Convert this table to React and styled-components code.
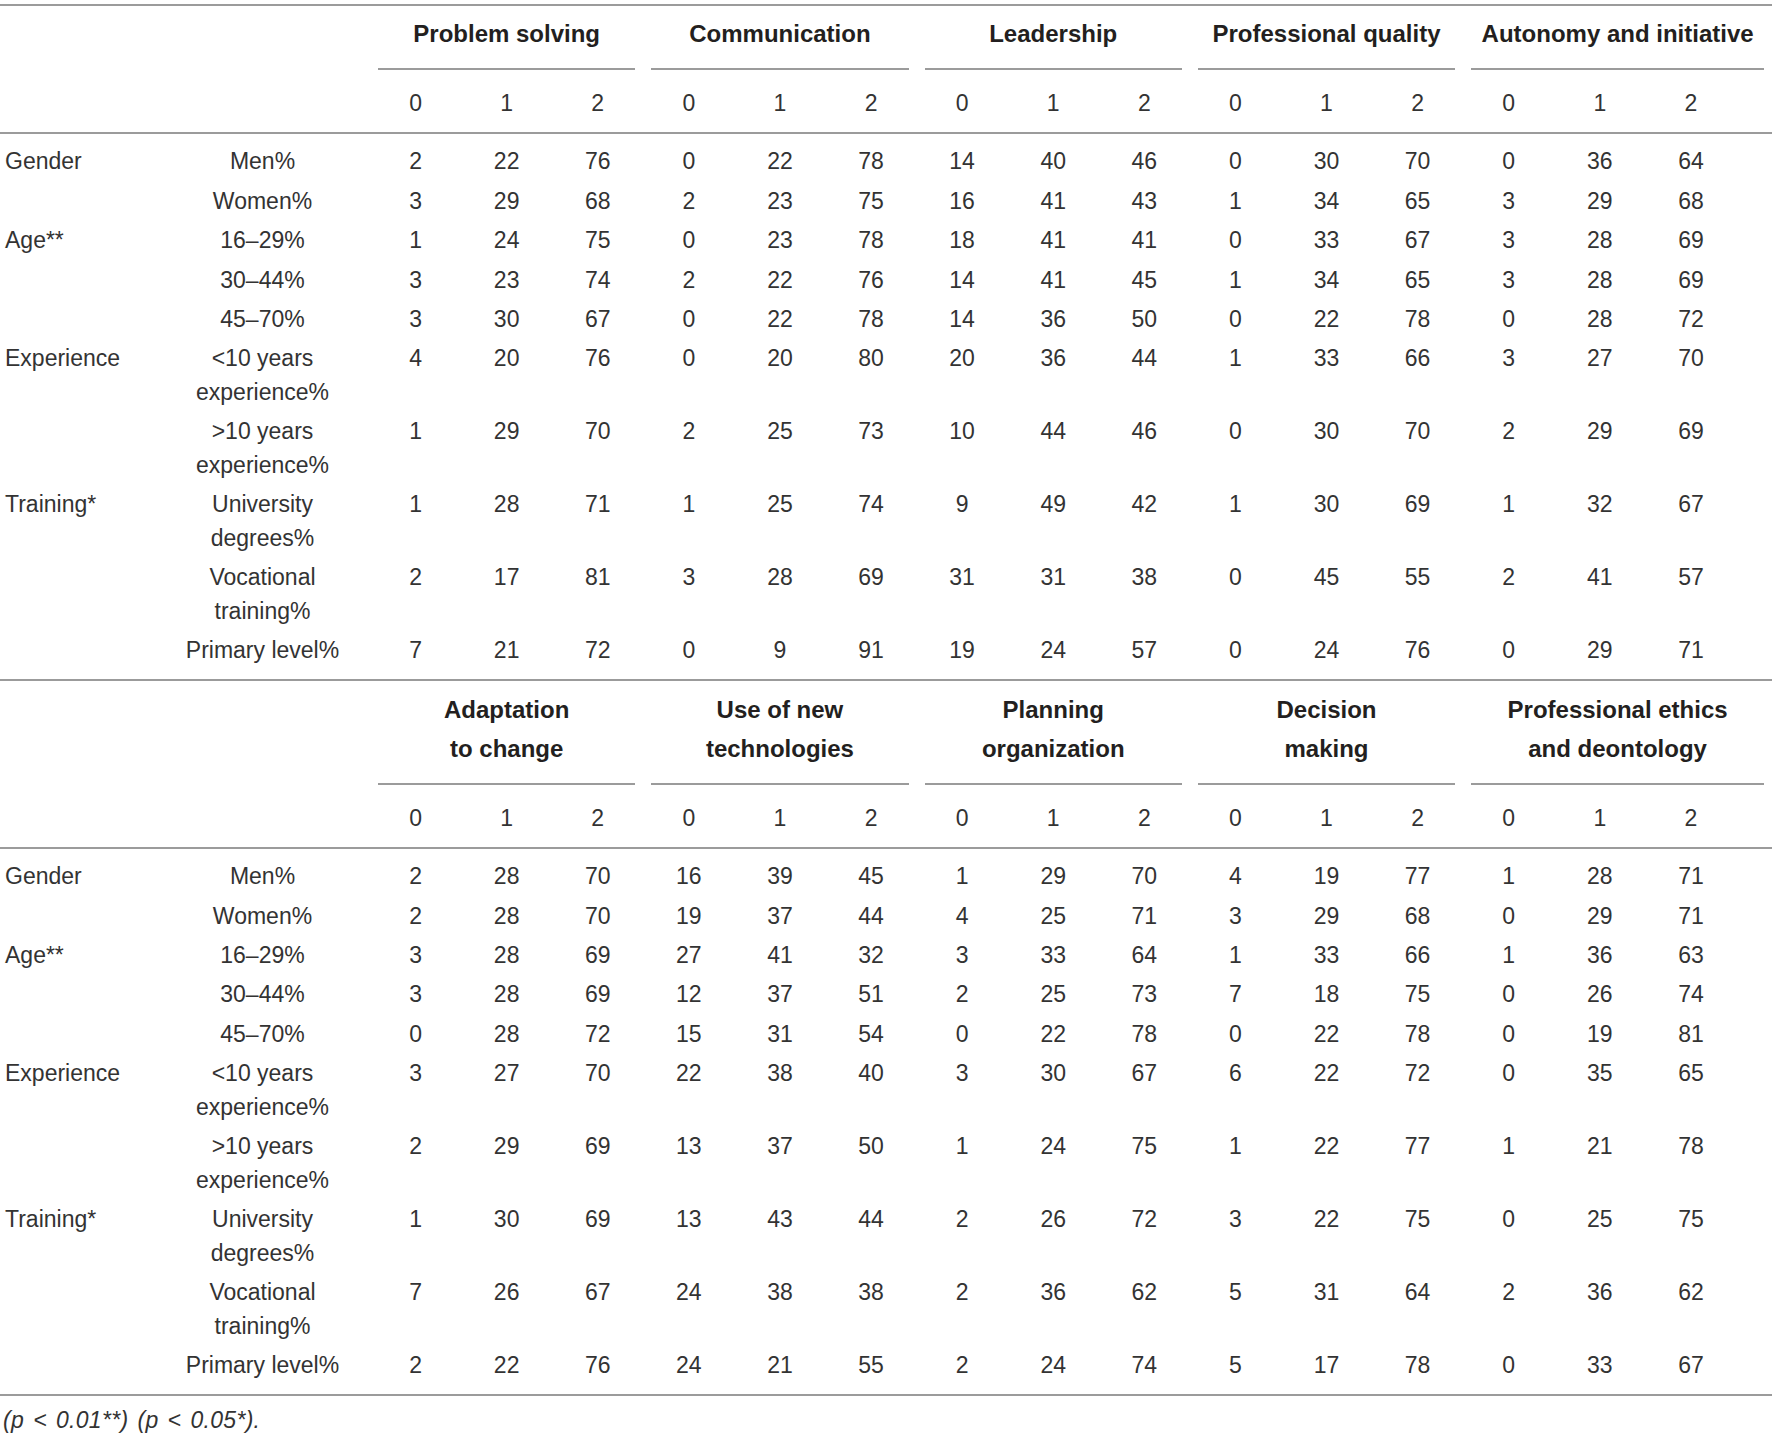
import React from 'react';
import styled, { createGlobalStyle } from 'styled-components';

const GlobalStyle = createGlobalStyle`
  body {
    margin: 0;
    background: #ffffff;
    color: #231f20;
    font-family: "Liberation Sans", Arial, sans-serif;
  }
`;

const Page = styled.div`
  padding-top: 3.6px;
  width: 1772px;
`;

const Table = styled.table`
  width: 1772px;
  table-layout: fixed;
  border-collapse: separate;
  border-spacing: 0;
  border-top: 2px solid #9b9b9b;
  font-size: 23px;
  color: #333333;
`;

const GroupHead = styled.th`
  padding: 8.6px 8px 0;
  font-size: 24px;
  font-weight: bold;
  line-height: 39.6px;
  text-align: center;
  vertical-align: bottom;
  color: #231f20;
`;

const GroupRule = styled.div`
  padding-bottom: 14px;
  border-bottom: 2px solid #9b9b9b;
`;

const ScoreHead = styled.th`
  padding: 16px ${(p) => (p.$edge ? '35.4px' : '0')} 12px 0;
  font-weight: normal;
  line-height: 34px;
  text-align: center;
  border-bottom: 2px solid #9b9b9b;
`;

const Cell = styled.td`
  padding-top: ${(p) => (p.$first ? '11.6px' : '2.9px')};
  padding-bottom: ${(p) => (p.$last ? '11.2px' : '2.9px')};
  padding-left: ${(p) => (p.$left ? '5px' : '0')};
  padding-right: ${(p) => (p.$edge ? '35.4px' : '0')};
  line-height: 33.6px;
  vertical-align: top;
  text-align: ${(p) => (p.$left ? 'left' : 'center')};
  border-bottom: ${(p) => (p.$last ? '2px solid #9b9b9b' : 'none')};
`;

const Footnote = styled.p`
  margin: 0;
  padding: 9.5px 0 0 3px;
  font-size: 23px;
  font-style: italic;
  line-height: 30px;
  letter-spacing: 0.3px;
  word-spacing: 2.4px;
  color: #333333;
`;

const rowLabels = [
  ['Gender', ['Men%']],
  ['', ['Women%']],
  ['Age**', ['16–29%']],
  ['', ['30–44%']],
  ['', ['45–70%']],
  ['Experience', ['<10 years', 'experience%']],
  ['', ['>10 years', 'experience%']],
  ['Training*', ['University', 'degrees%']],
  ['', ['Vocational', 'training%']],
  ['', ['Primary level%']],
];

const sections = [
  {
    groups: [
      ['Problem solving'],
      ['Communication'],
      ['Leadership'],
      ['Professional quality'],
      ['Autonomy and initiative'],
    ],
    rows: [
      [2, 22, 76, 0, 22, 78, 14, 40, 46, 0, 30, 70, 0, 36, 64],
      [3, 29, 68, 2, 23, 75, 16, 41, 43, 1, 34, 65, 3, 29, 68],
      [1, 24, 75, 0, 23, 78, 18, 41, 41, 0, 33, 67, 3, 28, 69],
      [3, 23, 74, 2, 22, 76, 14, 41, 45, 1, 34, 65, 3, 28, 69],
      [3, 30, 67, 0, 22, 78, 14, 36, 50, 0, 22, 78, 0, 28, 72],
      [4, 20, 76, 0, 20, 80, 20, 36, 44, 1, 33, 66, 3, 27, 70],
      [1, 29, 70, 2, 25, 73, 10, 44, 46, 0, 30, 70, 2, 29, 69],
      [1, 28, 71, 1, 25, 74, 9, 49, 42, 1, 30, 69, 1, 32, 67],
      [2, 17, 81, 3, 28, 69, 31, 31, 38, 0, 45, 55, 2, 41, 57],
      [7, 21, 72, 0, 9, 91, 19, 24, 57, 0, 24, 76, 0, 29, 71],
    ],
  },
  {
    groups: [
      ['Adaptation', 'to change'],
      ['Use of new', 'technologies'],
      ['Planning', 'organization'],
      ['Decision', 'making'],
      ['Professional ethics', 'and deontology'],
    ],
    rows: [
      [2, 28, 70, 16, 39, 45, 1, 29, 70, 4, 19, 77, 1, 28, 71],
      [2, 28, 70, 19, 37, 44, 4, 25, 71, 3, 29, 68, 0, 29, 71],
      [3, 28, 69, 27, 41, 32, 3, 33, 64, 1, 33, 66, 1, 36, 63],
      [3, 28, 69, 12, 37, 51, 2, 25, 73, 7, 18, 75, 0, 26, 74],
      [0, 28, 72, 15, 31, 54, 0, 22, 78, 0, 22, 78, 0, 19, 81],
      [3, 27, 70, 22, 38, 40, 3, 30, 67, 6, 22, 72, 0, 35, 65],
      [2, 29, 69, 13, 37, 50, 1, 24, 75, 1, 22, 77, 1, 21, 78],
      [1, 30, 69, 13, 43, 44, 2, 26, 72, 3, 22, 75, 0, 25, 75],
      [7, 26, 67, 24, 38, 38, 2, 36, 62, 5, 31, 64, 2, 36, 62],
      [2, 22, 76, 24, 21, 55, 2, 24, 74, 5, 17, 78, 0, 33, 67],
    ],
  },
];

const lines = (parts) =>
  parts.map((t, i) => (
    <React.Fragment key={i}>
      {i > 0 && <br />}
      {t}
    </React.Fragment>
  ));

const Section = ({ groups, rows }) => {
  const scores = [];
  for (let g = 0; g < 5; g++) {
    for (let s = 0; s < 3; s++) scores.push(s);
  }
  return (
    <tbody>
      <tr>
        <th />
        <th />
        {groups.map((g, i) => (
          <GroupHead key={i} colSpan={3}>
            <GroupRule>{lines(g)}</GroupRule>
          </GroupHead>
        ))}
      </tr>
      <tr>
        <ScoreHead />
        <ScoreHead />
        {scores.map((s, i) => (
          <ScoreHead key={i} $edge={i === 14}>
            {s}
          </ScoreHead>
        ))}
      </tr>
      {rows.map((values, r) => {
        const first = r === 0;
        const last = r === rows.length - 1;
        const [group, label] = rowLabels[r];
        return (
          <tr key={r}>
            <Cell $left $first={first} $last={last}>
              {group}
            </Cell>
            <Cell $first={first} $last={last}>
              {lines(label)}
            </Cell>
            {values.map((v, i) => (
              <Cell key={i} $first={first} $last={last} $edge={i === 14}>
                {v}
              </Cell>
            ))}
          </tr>
        );
      })}
    </tbody>
  );
};

const App = () => {
  const dataCols = [];
  for (let i = 0; i < 14; i++) dataCols.push(<col key={i} style={{ width: '91.1px' }} />);
  return (
    <Page>
      <GlobalStyle />
      <Table>
        <colgroup>
          <col style={{ width: '155px' }} />
          <col style={{ width: '215px' }} />
          {dataCols}
          <col style={{ width: '126.6px' }} />
        </colgroup>
        {sections.map((s, i) => (
          <Section key={i} groups={s.groups} rows={s.rows} />
        ))}
      </Table>
      <Footnote>(p &lt; 0.01**) (p &lt; 0.05*).</Footnote>
    </Page>
  );
};

export default App;
